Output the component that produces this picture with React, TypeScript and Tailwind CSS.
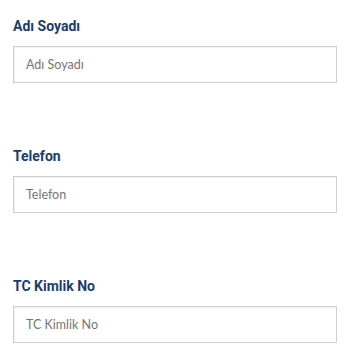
import React from 'react'

const fields = ['Adı Soyadı', 'Telefon', 'TC Kimlik No']

const App = () => {
  return (
    <div className="w-[350px] h-[350px] overflow-hidden bg-white px-[13px] pt-[16px]">
      <div className="flex flex-col gap-[63px]">
        {fields.map((name) => (
          <div key={name} className="flex flex-col">
            <label
              className="mb-[10px] text-[14px] leading-[20px] font-bold text-[#1b3c6e]"
              style={{ fontFamily: 'Roboto, "Noto Sans", sans-serif' }}
            >
              {name}
            </label>
            <input
              type="text"
              placeholder={name}
              className="h-[37px] w-[324px] border border-[#cfcfcf] bg-white px-[12px] text-[12.5px] text-[#555] placeholder:text-[#757575] outline-none shadow-[inset_1px_1px_1px_rgba(0,0,0,0.05)]"
              style={{ fontFamily: 'Lato, "Noto Sans", sans-serif' }}
            />
          </div>
        ))}
      </div>
    </div>
  )
}

export default App
